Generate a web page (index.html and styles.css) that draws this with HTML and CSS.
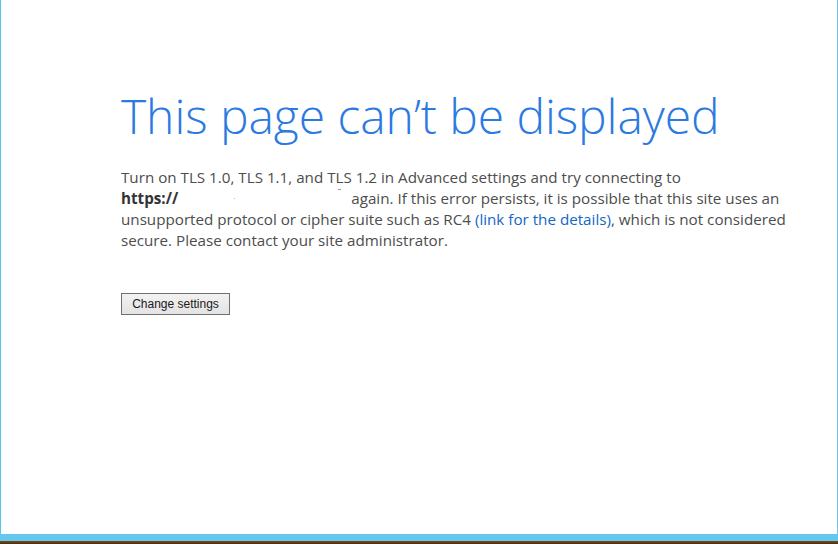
FILE: index.html
```html
<!DOCTYPE html>
<html>
<head>
<meta charset="utf-8">
<title>This page can’t be displayed</title>
<link rel="stylesheet" href="styles.css">
</head>
<body>
<div class="frame">
  <main class="content">
    <h1 class="title">This page can’t be displayed</h1>
    <p class="message">Turn on TLS 1.0, TLS 1.1, and TLS 1.2 in Advanced settings and try connecting to<br><b class="url">https://</b><span class="redacted"><span class="speck speck-a"></span><span class="speck speck-b"></span></span>again. If this error persists, it is possible that this site uses an<br>unsupported protocol or cipher suite such as RC4 <a class="link" href="#">(link for the details)</a>, which is not considered<br>secure. Please contact your site administrator.</p>
    <button class="btn" type="button">Change settings</button>
  </main>
  <div class="taskband"></div>
</div>
</body>
</html>
```
FILE: styles.css
```css
html, body {
  margin: 0;
  padding: 0;
  background: #ffffff;
}
.frame {
  width: 838px;
  height: 544px;
  box-sizing: border-box;
  border-left: 1px solid #56c6f0;
  border-right: 1px solid #6cc4ea;
  display: flex;
  flex-direction: column;
}
.content {
  flex: 1;
  padding: 86px 0 0 120px;
}
.title {
  margin: 0;
  font-family: "Open Sans", sans-serif;
  font-weight: 300;
  font-size: 48px;
  line-height: 60px;
  color: #2a7ae2;
  letter-spacing: -0.05px;
  white-space: nowrap;
}
.message {
  margin: 21px 0 0 0;
  font-family: "Open Sans", sans-serif;
  font-size: 15.2px;
  line-height: 21px;
  color: #4d4d4d;
  white-space: nowrap;
}
.url {
  color: #333333;
  font-weight: 700;
}
.redacted {
  display: inline-block;
  width: 173px;
  height: 10px;
  position: relative;
}
.speck {
  position: absolute;
  background: #bdbdbd;
}
.speck-a {
  left: 56px;
  top: 4px;
  width: 1px;
  height: 1px;
}
.speck-b {
  left: 160px;
  top: -5px;
  width: 3px;
  height: 1px;
  background: #999999;
}
.link {
  color: #1566c6;
  text-decoration: none;
}
.btn {
  margin-top: 42px;
  width: 109px;
  height: 22px;
  padding: 0;
  border: 1px solid #707070;
  border-radius: 0;
  background: linear-gradient(#f2f2f2, #e3e3e3);
  font-family: "Liberation Sans", Arial, sans-serif;
  font-size: 12px;
  color: #1a1a1a;
  display: block;
}
.taskband {
  height: 10px;
  margin: 0 -1px;
  background: linear-gradient(#63c8ef 0, #63c8ef 7px, #7a4a1c 7px, #4a2c0c 10px);
}
```
